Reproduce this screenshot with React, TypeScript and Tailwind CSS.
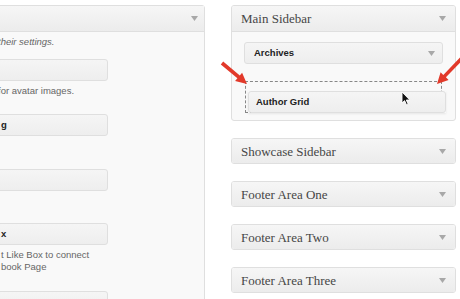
import type { ReactNode } from 'react'

const serif = { fontFamily: '"Liberation Serif", Georgia, serif' }
const sans = { fontFamily: '"Liberation Sans", Arial, sans-serif' }

function Caret() {
  return (
    <svg width="7" height="5" viewBox="0 0 7 5" aria-hidden="true" className="shrink-0">
      <path d="M0 0 H7 L3.5 5 Z" fill="#a8a8a8" />
    </svg>
  )
}

function SidebarHeader({ title, open }: { title: string; open?: boolean }) {
  return (
    <div
      className={`flex items-center justify-between bg-gradient-to-b from-[#f6f6f6] to-[#ececec] pl-[9px] pr-[9px] ${
        open ? 'h-[26px] border-b border-[#dfdfdf]' : 'h-[24px]'
      }`}
    >
      <span className="text-[13px] leading-none text-[#464646]" style={serif}>
        {title}
      </span>
      <Caret />
    </div>
  )
}

function CollapsedSidebar({ title }: { title: string }) {
  return (
    <div className="overflow-hidden rounded-[3px] border border-[#dfdfdf] shadow-[0_1px_0_#fff_inset]">
      <SidebarHeader title={title} />
    </div>
  )
}

function WidgetBox({ children, caret, className = '' }: { children?: ReactNode; caret?: boolean; className?: string }) {
  return (
    <div
      className={`flex h-[22px] items-center justify-between rounded-[3px] border border-[#dfdfdf] bg-gradient-to-b from-[#f5f5f5] to-[#eeeeee] ${className}`}
    >
      <span className="whitespace-nowrap text-[9.5px] font-bold text-[#222]" style={sans}>
        {children}
      </span>
      {caret && (
        <span className="mr-[7px]">
          <Caret />
        </span>
      )}
    </div>
  )
}

function Cursor() {
  return (
    <svg width="10" height="15" viewBox="0 0 10 15" aria-hidden="true">
      <path d="M1 1 L1 12 L3.6 9.6 L5.6 14 L7.2 13.3 L5.3 9 L8.8 9 Z" fill="#111" stroke="#fff" strokeWidth="0.9" />
    </svg>
  )
}

function Arrows() {
  return (
    <svg className="pointer-events-none absolute left-0 top-0" width="460" height="299" aria-hidden="true">
      <polygon
        points="223.2,61.6 239.8,75.5 242.1,72.7 247,84 235.1,81.1 237.4,78.3 220.8,64.4"
        fill="#e2392a"
      />
      <polygon
        points="460.7,56.8 443.3,74.9 440.6,72.3 437,84 448.6,79.9 445.9,77.3 463.3,59.2"
        fill="#e2392a"
      />
    </svg>
  )
}

export default function App() {
  return (
    <div className="relative h-[299px] w-[460px] overflow-hidden bg-white" style={sans}>
      <div className="flex pt-[5px]">
        {/* available widgets, cut off at the left edge */}
        <div className="ml-[-25px] h-[320px] w-[230px] shrink-0 rounded-[3px] border border-[#dfdfdf] bg-[#f9f9f9]">
          <div className="flex h-[26px] items-center justify-end border-b border-[#dfdfdf] bg-gradient-to-b from-[#f6f6f6] to-[#ececec] pr-[6px]">
            <Caret />
          </div>
          <div className="flex flex-col pl-[12px] text-[9.5px] text-[#666]">
            <p className="mt-[3px] ml-[10px] whitespace-nowrap italic leading-[14px]">their settings.</p>
            <WidgetBox className="mt-[10px] w-[120px]" />
            <p className="mt-[3px] ml-[10px] whitespace-nowrap leading-[14px]">for avatar images.</p>
            <WidgetBox className="mt-[16px] w-[120px]">
              <span className="ml-[12px]">g</span>
            </WidgetBox>
            <WidgetBox className="mt-[33px] w-[120px]" />
            <WidgetBox className="mt-[32px] w-[120px]">
              <span className="ml-[12px]">x</span>
            </WidgetBox>
            <div className="mt-[4px] ml-[13px] leading-[12px]">
              <p className="whitespace-nowrap">t Like Box to connect</p>
              <p className="whitespace-nowrap">book Page</p>
            </div>
            <WidgetBox className="mt-[18px] w-[120px]" />
          </div>
        </div>

        {/* sidebars */}
        <div className="ml-[26px] flex w-[225px] shrink-0 flex-col">
          <div className="overflow-hidden rounded-[3px] border border-[#dfdfdf] bg-[#f9f9f9]">
            <SidebarHeader title="Main Sidebar" open />
            <div className="px-[12px] pb-[7px] pt-[10px]">
              <WidgetBox caret className="pl-[9px]">
                Archives
              </WidgetBox>
              <div className="relative ml-[1px] mr-[1px] mt-[17px] h-[32px] border border-dashed border-[#888]">
                <div className="absolute left-[2px] top-[9px] w-[198px] shadow-[0_1px_2px_rgba(0,0,0,0.08)]">
                  <WidgetBox className="pl-[7px]">Author Grid</WidgetBox>
                </div>
                <div className="absolute left-[155px] top-[9px]">
                  <Cursor />
                </div>
              </div>
            </div>
          </div>
          <div className="mt-[17px] flex flex-col gap-[17px]">
            <CollapsedSidebar title="Showcase Sidebar" />
            <CollapsedSidebar title="Footer Area One" />
            <CollapsedSidebar title="Footer Area Two" />
            <CollapsedSidebar title="Footer Area Three" />
          </div>
        </div>
      </div>
      <Arrows />
    </div>
  )
}
